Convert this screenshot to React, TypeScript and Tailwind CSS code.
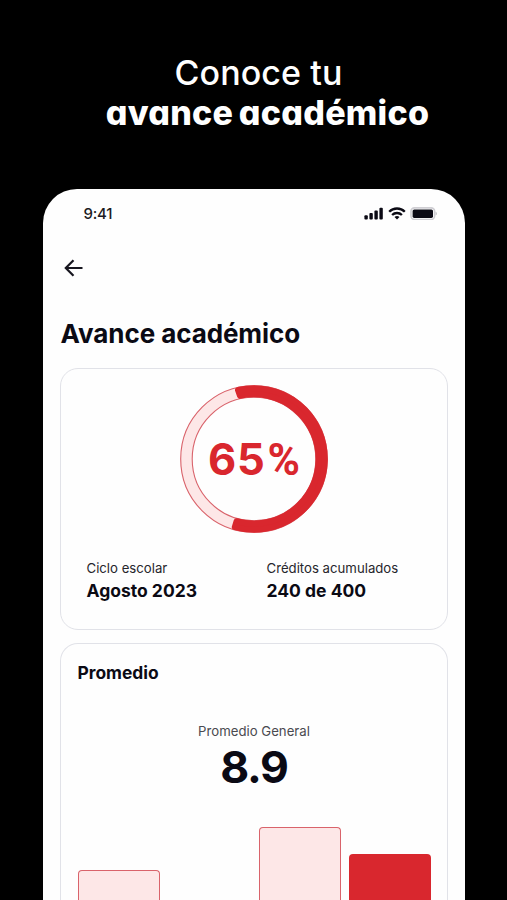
import React from 'react'

interface StatProps {
  label: string
  value: string
}

// Alturas visibles de cada periodo, el gráfico continúa fuera de la pantalla
const bars = [
  { id: 1, height: 30, active: false },
  { id: 2, height: 0, active: false },
  { id: 3, height: 73, active: false },
  { id: 4, height: 46, active: true },
]

function StatusBar() {
  return (
    <div className="flex h-[50px] items-center justify-between pr-[27px] pl-[41px]">
      <span className="text-[15px] leading-5 font-medium tracking-[-0.2px] text-[#1b1b22]">9:41</span>
      <div className="-mt-[2px] flex items-center text-[#0b0a14]">
        <svg width="20" height="13" viewBox="0 0 20 13" fill="currentColor">
          <rect x="0.4" y="8.2" width="3.4" height="4.2" rx="1" />
          <rect x="5.4" y="6" width="3.4" height="6.4" rx="1" />
          <rect x="10.4" y="3.5" width="3.4" height="8.9" rx="1" />
          <rect x="15.4" y="0.8" width="3.4" height="11.6" rx="1" />
        </svg>
        <svg className="ml-[4px]" width="18" height="13" viewBox="0 0 18 13" fill="none" stroke="currentColor" strokeWidth="2.3">
          <path d="M1.2 4.7C5.4 .4 12.6 .4 16.8 4.7" />
          <path d="M4.1 8C6.8 5.3 11.2 5.3 13.9 8" />
          <path d="M9 12.5 6.5 10C8 8.6 10 8.6 11.5 10Z" fill="currentColor" stroke="none" />
        </svg>
        <svg className="ml-[4px]" width="28" height="13" viewBox="0 0 28 13">
          <rect x="1" y="0.9" width="23.6" height="11.6" rx="3.4" fill="none" stroke="#cfced3" strokeWidth="1.6" />
          <rect x="2.6" y="2.5" width="20.4" height="8.4" rx="1.6" fill="currentColor" />
          <path d="M25.7 4.8C27.1 5.4 27.1 8 25.7 8.6Z" fill="#b5b4ba" />
        </svg>
      </div>
    </div>
  )
}

function ProgressRing() {
  return (
    <div className="grid size-[148px] place-items-center">
      <svg className="col-start-1 row-start-1" width="148" height="148" viewBox="0 0 148 148" fill="none">
        <circle cx="74" cy="74" r="67.7" stroke="#fde7e7" strokeWidth="11.5" />
        <circle cx="74" cy="74" r="73.3" stroke="#d9636b" strokeWidth="1.1" />
        <circle cx="74" cy="74" r="61.8" stroke="#d9636b" strokeWidth="1.1" />
        <path
          d="M58 5A70.8 70.8 0 1 1 54.8 142.1L56.6 136.2A64.6 64.6 0 1 0 60 10.9Z"
          fill="#d9272e"
          stroke="#d9272e"
          strokeWidth="6"
          strokeLinejoin="round"
        />
      </svg>
      <span className="col-start-1 row-start-1 pt-[2px] pl-[1px] text-[43.5px] leading-none font-bold whitespace-nowrap text-[#d9272e]">
        <span className="tracking-[0.7px]">65</span>
        <span className="ml-[2px] font-['Roboto',sans-serif] text-[44px]">%</span>
      </span>
    </div>
  )
}

function Stat({ label, value }: StatProps) {
  return (
    <div className="w-[181px] whitespace-nowrap">
      <p className="text-[13.2px] leading-[20px] text-[#26262c]">{label}</p>
      <p className="text-[17.5px] leading-[25px] font-bold text-[#0b0a14]">{value}</p>
    </div>
  )
}

export default function App() {
  return (
    <div className="flex h-[900px] w-[507px] flex-col items-center overflow-hidden bg-black pt-[53px] font-['Inter',sans-serif]">
      <h1 className="flex h-[136px] flex-col items-center text-[34px] leading-10 whitespace-nowrap text-white [font-feature-settings:'cv11']">
        <span className="pl-[10px] font-medium tracking-[0.1px]">Conoce tu</span>
        <span className="pl-[28px] font-extrabold tracking-[0.25px] [word-spacing:-2px]">avance académico</span>
      </h1>

      <main className="flex w-[422px] flex-1 flex-col overflow-hidden rounded-t-[34px] bg-[#fefefe]">
        <StatusBar />

        <div className="pt-[20px] pl-[21px] text-[#17161f]">
          <svg width="20" height="18" viewBox="0 0 20 18" fill="none" stroke="currentColor" strokeWidth="2.2">
            <path d="M18.5 9H2M9.5 1.2L1.8 9L9.5 16.8" />
          </svg>
        </div>

        <h2 className="mt-[41px] ml-[18px] text-[26px] leading-[32px] font-bold tracking-[-0.08px] whitespace-nowrap text-[#0b0a14]">
          Avance académico
        </h2>

        <section className="mt-[18px] ml-[17px] flex h-[262px] w-[388px] shrink-0 flex-col items-center rounded-[18px] border border-[#e1e2e8] pt-[16px]">
          <ProgressRing />
          <div className="mt-[25px] flex w-full pl-[26px]">
            <Stat label="Ciclo escolar" value="Agosto 2023" />
            <Stat label="Créditos acumulados" value="240 de 400" />
          </div>
        </section>

        <section className="mt-[13px] ml-[17px] flex w-[388px] flex-1 flex-col rounded-t-[18px] border border-b-0 border-[#e1e2e8] pr-[16px] pl-[17px]">
          <h3 className="mt-[17px] text-[17.4px] leading-[24px] font-bold text-[#0b0a14]">Promedio</h3>
          <div className="mt-[36px] flex flex-col items-center">
            <p className="text-[13.2px] leading-[20px] text-[#4a4a50]">Promedio General</p>
            <p className="text-[44.5px] leading-[52px] font-bold tracking-[-1.2px] text-[#0b0a14]">8.9</p>
          </div>
          <div className="mt-auto flex items-end gap-[8.5px]">
            {bars.map((bar) => (
              <div
                key={bar.id}
                className={
                  bar.active
                    ? 'w-[82px] shrink-0 rounded-t-[4px] bg-[#d9272e]'
                    : 'w-[82px] shrink-0 rounded-t-[4px] border border-b-0 border-[#d9636b] bg-[#fde7e7]'
                }
                style={{ height: bar.height, visibility: bar.height ? 'visible' : 'hidden' }}
              />
            ))}
          </div>
        </section>
      </main>
    </div>
  )
}
